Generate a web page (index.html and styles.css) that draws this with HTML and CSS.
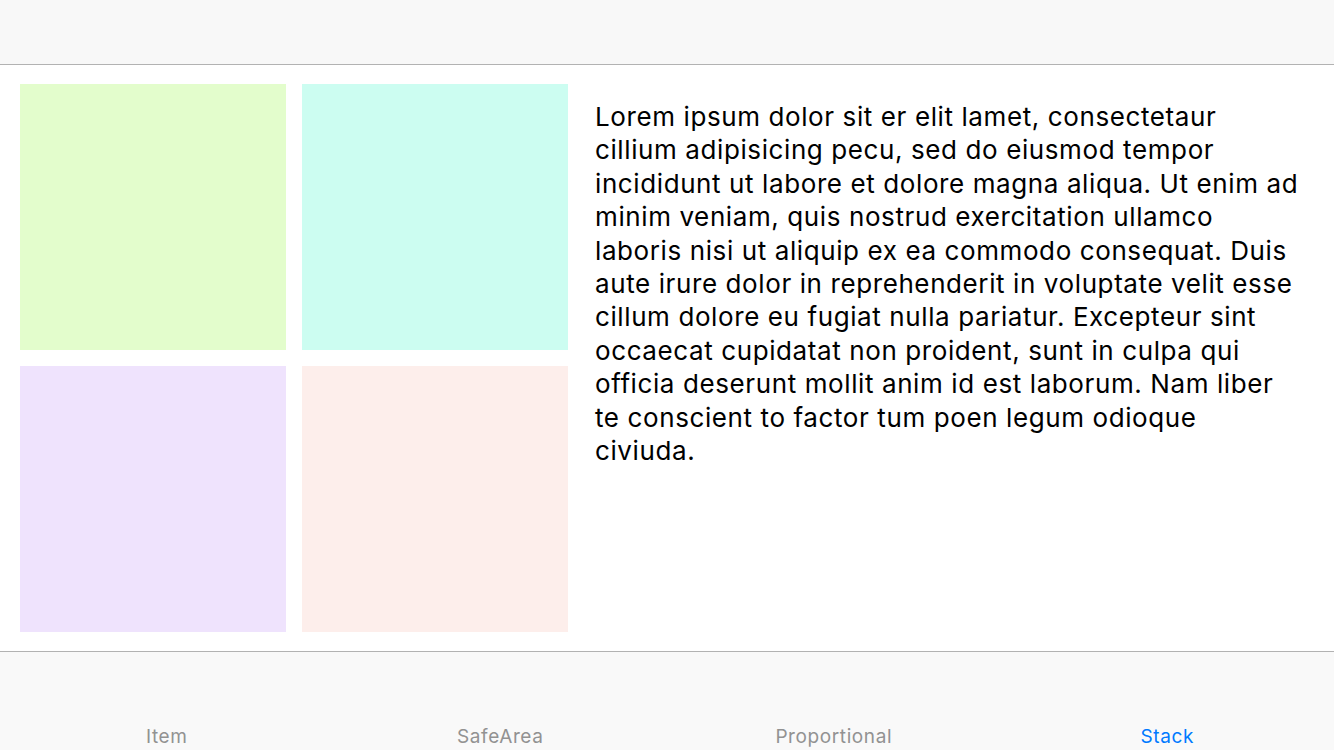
FILE: index.html
```html
<!DOCTYPE html>
<html lang="en">
<head>
  <meta charset="UTF-8" />
  <meta name="viewport" content="width=device-width, initial-scale=1.0" />
  <title>Stack</title>
  <link rel="stylesheet" href="styles.css">
</head>
<body>
  <div class="navBar"></div>

  <div class="content">
    <div class="tiles">
      <div class="tile green"></div>
      <div class="tile cyan"></div>
      <div class="tile lavender"></div>
      <div class="tile pink"></div>
    </div>
    <p class="bodyText">Lorem ipsum dolor sit er elit lamet, consectetaur cillium adipisicing pecu, sed do eiusmod tempor incididunt ut labore et dolore magna aliqua. Ut enim ad minim veniam, quis nostrud exercitation ullamco laboris nisi ut aliquip ex ea commodo consequat. Duis aute irure dolor in reprehenderit in voluptate velit esse cillum dolore eu fugiat nulla pariatur. Excepteur sint occaecat cupidatat non proident, sunt in culpa qui officia deserunt mollit anim id est laborum. Nam liber te conscient to factor tum poen legum odioque civiuda.</p>
  </div>

  <div class="tabBar">
    <div class="tab">Item</div>
    <div class="tab">SafeArea</div>
    <div class="tab">Proportional</div>
    <div class="tab active">Stack</div>
  </div>
</body>
</html>
```

FILE: styles.css
```css
body {
  margin: 0;
  width: 1334px;
  height: 750px;
  overflow: hidden;
  font-family: Inter, "Noto Sans", sans-serif;
  background-color: white;
  display: flex;
  flex-direction: column;
}

.navBar {
  height: 64px;
  background-color: #f8f8f8;
  border-bottom: 1px solid #b2b2b2;
}

.content {
  height: 567px;
  padding: 19px 20px 0 20px;
  display: flex;
  gap: 27px;
}

.tiles {
  display: grid;
  grid-template-columns: 266px 266px;
  grid-template-rows: 266px 266px;
  gap: 16px;
}

.green { background-color: #e3fdcc; }
.cyan { background-color: #ccfdf1; }
.lavender { background-color: #efe3fd; }
.pink { background-color: #fdeeeb; }

.bodyText {
  margin: 0;
  padding-top: 16px;
  width: 706px;
  font-size: 26px;
  line-height: 33.4px;
  letter-spacing: 0.6px;
  color: #000;
}

.tabBar {
  flex: 1;
  background-color: #f9f9f9;
  border-top: 1px solid #b2b2b2;
  display: flex;
  align-items: flex-end;
}

.tab {
  flex: 1;
  text-align: center;
  font-size: 19px;
  letter-spacing: 0.6px;
  color: #929292;
  padding-bottom: 2px;
}

.tab.active {
  color: #007aff;
}
```
